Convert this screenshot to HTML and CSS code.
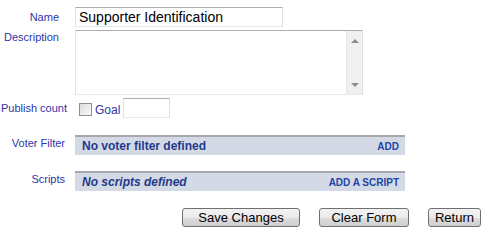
FILE: index.html
```html
<!DOCTYPE html>
<html lang="en">
<head>
  <meta charset="UTF-8">
  <title>Edit Survey</title>
  <link rel="stylesheet" href="styles.css">
</head>
<body>
  <form class="edit-form">
    <div class="row row-name">
      <label class="label">Name</label>
      <input type="text" class="text-input name-input" value="Supporter Identification">
    </div>
    <div class="row row-desc">
      <label class="label label-top">Description</label>
      <div class="textarea-box">
        <textarea class="textarea"></textarea>
        <div class="scrollbar">
          <span class="arrow arrow-up"></span>
          <span class="arrow arrow-down"></span>
        </div>
      </div>
    </div>
    <div class="row row-publish">
      <label class="label label-publish">Publish count</label>
      <div class="publish-fields">
        <input type="checkbox" class="checkbox">
        <span class="goal">Goal</span>
        <input type="text" class="text-input goal-input">
      </div>
    </div>
    <div class="row row-list">
      <label class="label label-list">Voter Filter</label>
      <div class="list-bar">
        <span class="bar-title">No voter filter defined</span>
        <a class="bar-action">ADD</a>
      </div>
    </div>
    <div class="row row-list row-scripts">
      <label class="label label-list">Scripts</label>
      <div class="list-bar">
        <span class="bar-title bar-empty">No scripts defined</span>
        <a class="bar-action">ADD A SCRIPT</a>
      </div>
    </div>
    <div class="actions">
      <button type="button" class="btn btn-save">Save Changes</button>
      <button type="button" class="btn btn-clear">Clear Form</button>
      <button type="button" class="btn btn-return">Return</button>
    </div>
  </form>
</body>
</html>
```

FILE: styles.css
```css
* {
  box-sizing: border-box;
  margin: 0;
  padding: 0;
}

body {
  background: #ffffff;
  font-family: "Liberation Sans", Arial, sans-serif;
  overflow: hidden;
}

.edit-form {
  display: flex;
  flex-direction: column;
  padding-top: 7px;
}

.row {
  display: flex;
  align-items: center;
}

.label {
  width: 75px;
  flex-shrink: 0;
  display: flex;
  justify-content: flex-end;
  padding-right: 16px;
  font-size: 11px;
  color: #2e35a8;
  white-space: nowrap;
}

.label-top {
  align-self: flex-start;
  padding-top: 1px;
}

.label-publish {
  padding-right: 8px;
}

.label-list {
  align-self: flex-start;
  padding-top: 2px;
  padding-right: 10px;
}

.text-input {
  height: 20px;
  border: 1px solid;
  border-color: #abadb3 #dbdfe6 #e3e9ef #e2e3ea;
  padding: 0 3px;
  font-family: "Liberation Sans", Arial, sans-serif;
  font-size: 14px;
  color: #000000;
  background: #ffffff;
  outline: none;
}

.name-input {
  width: 208px;
}

.row-desc {
  margin-top: 3px;
}

.textarea-box {
  width: 288px;
  height: 65px;
  display: flex;
  border: 1px solid;
  border-color: #abadb3 #dbdfe6 #e3e9ef #e2e3ea;
}

.textarea {
  flex: 1;
  border: none;
  resize: none;
  outline: none;
  overflow: hidden;
}

.scrollbar {
  width: 16px;
  display: flex;
  flex-direction: column;
  justify-content: space-between;
  align-items: center;
  padding: 8px 0 7px;
  background: #f0f0f0;
  border-left: 1px solid #e6e6e6;
}

.arrow {
  width: 0;
  height: 0;
  border-left: 4px solid transparent;
  border-right: 4px solid transparent;
}

.arrow-up {
  border-bottom: 4px solid #8c8c8c;
}

.arrow-down {
  border-top: 4px solid #8c8c8c;
}

.row-publish {
  margin-top: 3px;
}

.publish-fields {
  display: flex;
  align-items: center;
}

.checkbox {
  appearance: none;
  width: 13px;
  height: 13px;
  margin: 2px 3px 0 4px;
  border: 1px solid #8e8f8f;
  background: linear-gradient(135deg, #dcdcdc, #fbfbfb);
}

.goal {
  font-size: 12px;
  color: #2e35a8;
  margin-top: 3px;
  margin-right: 3px;
}

.goal-input {
  width: 47px;
}

.row-list {
  margin-top: 17px;
}

.row-scripts {
  margin-top: 16px;
}

.list-bar {
  width: 330px;
  height: 20px;
  display: flex;
  align-items: center;
  justify-content: space-between;
  padding: 0 6px 0 7px;
  background: #d4dae5;
  border-top: 2px solid #a6a8ad;
}

.bar-title {
  font-size: 12px;
  font-weight: bold;
  color: #1f3a8c;
}

.bar-empty {
  font-style: italic;
}

.bar-action {
  font-size: 10px;
  font-weight: bold;
  color: #2244aa;
  cursor: pointer;
}

.actions {
  display: flex;
  margin-top: 17px;
  padding-left: 182px;
  gap: 19px;
}

.btn {
  height: 19px;
  border: 1px solid #707070;
  border-radius: 3px;
  background: linear-gradient(#f2f2f2, #ebebeb 50%, #dddddd 51%, #cfcfcf);
  font-family: "Liberation Sans", Arial, sans-serif;
  font-size: 13px;
  color: #000000;
}

.btn-save {
  width: 118px;
}

.btn-clear {
  width: 90px;
}

.btn-return {
  width: 53px;
}
```
